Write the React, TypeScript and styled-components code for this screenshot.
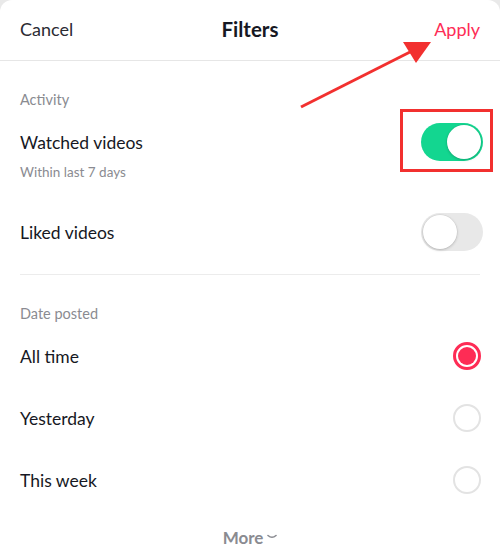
import React, { useState } from "react";
import styled, { createGlobalStyle } from "styled-components";

const Global = createGlobalStyle`
  html, body { margin: 0; padding: 0; background: #e9e9e9; }
  body { font-family: Lato, "Noto Sans", sans-serif; -webkit-font-smoothing: antialiased; }
`;

const Sheet = styled.div`
  position: relative;
  width: 500px;
  height: 554px;
  background: #fff;
  border-radius: 12px 12px 0 0;
  overflow: hidden;
  display: flex;
  flex-direction: column;
  & > * { flex-shrink: 0; }
`;

const Header = styled.div`
  box-sizing: border-box;
  height: 61px;
  border-bottom: 1px solid #e6e6e6;
  display: grid;
  grid-template-columns: 1fr auto 1fr;
  align-items: center;
  padding: 0 20px 3px;
`;

const HeaderText = styled.span<{ $align: "left" | "center" | "right"; $accent?: boolean; $bold?: boolean }>`
  font-size: ${(p) => (p.$bold ? "20.5px" : "18px")};
  font-weight: ${(p) => (p.$bold ? 700 : 400)};
  color: ${(p) => (p.$accent ? "#fe2c55" : p.$bold ? "#161823" : "#2b2b33")};
  text-align: ${(p) => p.$align};
`;

const Body = styled.div`
  display: flex;
  flex-direction: column;
  padding: 0 17px 0 20px;
  & > * { flex-shrink: 0; }
`;

const SectionLabel = styled.div<{ $top: number }>`
  margin-top: ${(p) => p.$top}px;
  height: 20px;
  line-height: 20px;
  font-size: 14.5px;
  color: #8a8b91;
`;

const Row = styled.div<{ $h: number; $top?: number }>`
  margin-top: ${(p) => p.$top ?? 0}px;
  height: ${(p) => p.$h}px;
  display: flex;
  align-items: center;
  justify-content: space-between;
`;

const Title = styled.span`
  font-size: 17.5px;
  color: #161823;
`;

const Subtitle = styled.div`
  margin-top: 1px;
  height: 18px;
  line-height: 18px;
  font-size: 13.5px;
  color: #8a8b91;
`;

const Divider = styled.div`
  margin-top: 22px;
  margin-right: 3px;
  height: 1px;
  background: #ececec;
`;

const SwitchTrack = styled.button<{ $on: boolean }>`
  position: relative;
  width: 62px;
  height: 38px;
  border-radius: 19px;
  border: none;
  padding: 0;
  background: ${(p) => (p.$on ? "#13d690" : "#e8e8e8")};
  cursor: pointer;
`;

const SwitchKnob = styled.span<{ $on: boolean }>`
  position: absolute;
  top: 2px;
  left: ${(p) => (p.$on ? "26px" : "2px")};
  width: 34px;
  height: 34px;
  border-radius: 50%;
  background: #fff;
  box-shadow: 0 1px 3px rgba(0, 0, 0, 0.2), 0 0 0 0.5px rgba(0, 0, 0, 0.06);
`;

const Radio = styled.span<{ $on: boolean }>`
  box-sizing: border-box;
  width: 28px;
  height: 28px;
  margin-right: 2px;
  border-radius: 50%;
  border: ${(p) => (p.$on ? "3px solid #fe2c55" : "2px solid #e3e3e3")};
  padding: 2px;
  display: flex;
  &::after {
    content: "";
    flex: 1;
    border-radius: 50%;
    background: ${(p) => (p.$on ? "#fe2c55" : "transparent")};
  }
`;

const More = styled.div`
  height: 52px;
  display: flex;
  align-items: center;
  justify-content: center;
  gap: 4px;
  font-size: 17px;
  font-weight: 700;
  color: #8a8b91;
`;

const Highlight = styled.div`
  position: absolute;
  left: 400px;
  top: 109px;
  width: 87px;
  height: 57px;
  border: 3px solid #f2302f;
  pointer-events: none;
`;

const ArrowLayer = styled.svg`
  position: absolute;
  left: 0;
  top: 0;
  pointer-events: none;
`;

const Switch = ({ on }: { on: boolean }) => (
  <SwitchTrack $on={on} aria-pressed={on}>
    <SwitchKnob $on={on} />
  </SwitchTrack>
);

export default function App() {
  const [date] = useState("All time");
  const options = ["All time", "Yesterday", "This week"];
  return (
    <>
      <Global />
      <Sheet>
        <Header>
          <HeaderText $align="left">Cancel</HeaderText>
          <HeaderText $align="center" $bold>Filters</HeaderText>
          <HeaderText $align="right" $accent>Apply</HeaderText>
        </Header>
        <Body>
          <SectionLabel $top={29}>Activity</SectionLabel>
          <Row $h={40} $top={12}>
            <Title>Watched videos</Title>
            <Switch on />
          </Row>
          <Subtitle>Within last 7 days</Subtitle>
          <Row $h={40} $top={31}>
            <Title>Liked videos</Title>
            <Switch on={false} />
          </Row>
          <Divider />
          <SectionLabel $top={29}>Date posted</SectionLabel>
          {options.map((o, i) => (
            <Row key={o} $h={62} $top={i === 0 ? 1 : 0}>
              <Title>{o}</Title>
              <Radio $on={o === date} />
            </Row>
          ))}
        </Body>
        <More>
          More
          <svg width="10" height="6" viewBox="0 0 10 6">
            <path d="M1 1.5 Q5 5 9 1.5" fill="none" stroke="#8a8b91" strokeWidth="1.6" strokeLinecap="round" />
          </svg>
        </More>
        <Highlight />
        <ArrowLayer width="500" height="554" viewBox="0 0 500 554">
          <line x1="301" y1="107" x2="412" y2="51" stroke="#f2302f" strokeWidth="3" />
          <polygon points="431,42 403,42 416,63" fill="#f2302f" />
        </ArrowLayer>
      </Sheet>
    </>
  );
}
